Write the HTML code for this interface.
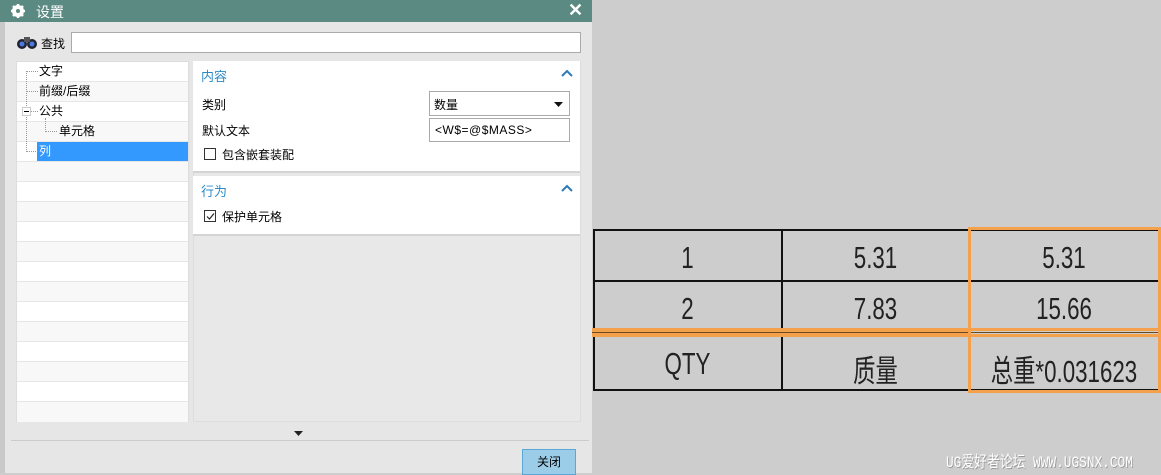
<!DOCTYPE html>
<html><head><meta charset="utf-8"><style>
*{margin:0;padding:0;box-sizing:border-box}
body{width:1161px;height:473px;background:#cdcdcd;position:relative;overflow:hidden;font-family:"Liberation Sans","Noto Sans CJK SC",sans-serif;font-size:12px;color:#000}
.a{position:absolute}
.dlg{left:0;top:0;width:592px;height:473px;background:#e6e6e6;border-left:5px solid #c9c9c9}
.title{left:0;top:0;width:592px;height:22px;background:#5b8a82;color:#fff;font-size:14px}
.tree{left:16px;top:61px;width:173px;height:361px;background:#fff;border:1px solid #ddd}
.row{position:absolute;left:0;width:171px;height:20px;border-bottom:1px solid #e6e6e6;line-height:19px}
.row:nth-child(even){background:#f8f8f8}
.sec{background:#fff;border-bottom:2px solid #d4d4d4;left:193px;width:387px}
.hd{color:#2c8ac8;font-size:13px}
.cb{width:12px;height:12px;border:1px solid #333;background:#fff}
.cell{position:absolute;font-family:"Liberation Sans Narrow","Liberation Sans","Noto Sans CJK SC",sans-serif;font-size:31px;text-align:center;transform:scaleX(.72);color:#222}
</style></head><body>
<div class="a dlg"></div>
<div class="a title">
 <svg class="a" style="left:11px;top:4px" width="14" height="14" viewBox="0 0 14 14"><circle cx="7" cy="7" r="4.5" fill="none" stroke="#fff" stroke-width="3"/><g stroke="#fff" stroke-width="2.5"><line x1="7" y1="0" x2="7" y2="14"/><line x1="0" y1="7" x2="14" y2="7"/><line x1="2" y1="2" x2="12" y2="12"/><line x1="12" y1="2" x2="2" y2="12"/></g><circle cx="7" cy="7" r="2" fill="#5b8a82"/></svg>
 <span class="a" style="left:36px;top:2px">设置</span>
 <span class="a" style="left:568px;top:0px;font-size:18px;font-weight:bold">✕</span>
</div>
<svg class="a" style="left:16px;top:34px" width="22" height="16" viewBox="0 0 22 16"><circle cx="6" cy="10" r="5" fill="#223" /><circle cx="16" cy="10" r="5" fill="#223"/><circle cx="6" cy="10" r="2.5" fill="#4a7adf"/><circle cx="16" cy="10" r="2.5" fill="#4a7adf"/><rect x="8" y="3" width="6" height="5" fill="#555"/></svg>
<span class="a" style="left:41px;top:35px">查找</span>
<div class="a" style="left:71px;top:32px;width:510px;height:21px;background:#fff;border:1px solid #aaa"></div>
<div class="a tree">
 <div class="row" style="top:0"><span style="margin-left:22px">文字</span></div>
 <div class="row" style="top:20px"><span style="margin-left:22px">前缀/后缀</span></div>
 <div class="row" style="top:40px"><span style="margin-left:22px">公共</span></div>
 <div class="row" style="top:60px"><span style="margin-left:42px">单元格</span></div>
 <div class="row" style="top:80px"><span style="position:absolute;left:20px;top:0;width:151px;height:19px;background:#3399ff;color:#fff;padding-left:2px">列</span></div>
 <div class="row" style="top:100px"></div><div class="row" style="top:120px"></div><div class="row" style="top:140px"></div><div class="row" style="top:160px"></div><div class="row" style="top:180px"></div><div class="row" style="top:200px"></div><div class="row" style="top:220px"></div><div class="row" style="top:240px"></div><div class="row" style="top:260px"></div><div class="row" style="top:280px"></div><div class="row" style="top:300px"></div><div class="row" style="top:320px"></div><div class="row" style="top:340px;border:0"></div>
 <div class="a" style="left:9px;top:9px;width:1px;height:81px;border-left:1px dotted #999"></div>
 <div class="a" style="left:9px;top:9px;width:12px;border-top:1px dotted #999"></div>
 <div class="a" style="left:9px;top:29px;width:12px;border-top:1px dotted #999"></div>
 <div class="a" style="left:9px;top:49px;width:12px;border-top:1px dotted #999"></div>
 <div class="a" style="left:9px;top:89px;width:12px;border-top:1px dotted #999"></div>
 <div class="a" style="left:28px;top:56px;width:1px;height:14px;border-left:1px dotted #999"></div>
 <div class="a" style="left:28px;top:69px;width:12px;border-top:1px dotted #999"></div>
 <div class="a" style="left:5px;top:45px;width:9px;height:9px;border:1px solid #ccc;background:#fff"><div class="a" style="left:1px;top:3px;width:5px;height:1px;background:#000"></div></div>
</div>
<div class="a" style="left:193px;top:61px;width:388px;height:361px;background:#e8e8e8;border:1px solid #ddd"></div>
<div class="a sec" style="top:61px;height:112px">
 <span class="a hd" style="left:8px;top:5px">内容</span>
 <svg class="a" style="left:368px;top:8px" width="12" height="8" viewBox="0 0 12 8"><path d="M1 7L6 2L11 7" fill="none" stroke="#2c7ab8" stroke-width="2"/></svg>
 <span class="a" style="left:9px;top:35px">类别</span>
 <div class="a" style="left:236px;top:30px;width:141px;height:25px;border:1px solid #aaa;background:#fff;padding:4px 4px">数量<svg class="a" style="right:6px;top:10px" width="9" height="5"><path d="M0 0H9L4.5 5Z" fill="#111"/></svg></div>
 <span class="a" style="left:9px;top:61px">默认文本</span>
 <div class="a" style="left:236px;top:57px;width:141px;height:24px;border:1px solid #aaa;background:#fff;padding:4px 5px;letter-spacing:.5px">&lt;W$=@$MASS&gt;</div>
 <div class="a cb" style="left:11px;top:87px"></div><span class="a" style="left:29px;top:85px">包含嵌套装配</span>
</div>
<div class="a sec" style="top:176px;height:60px">
 <span class="a hd" style="left:8px;top:5px">行为</span>
 <svg class="a" style="left:368px;top:8px" width="12" height="8" viewBox="0 0 12 8"><path d="M1 7L6 2L11 7" fill="none" stroke="#2c7ab8" stroke-width="2"/></svg>
 <div class="a cb" style="left:11px;top:34px"><svg class="a" style="left:1px;top:1px" width="9" height="9"><path d="M1 4.5L3.5 7L8 1.5" fill="none" stroke="#222" stroke-width="1.2"/></svg></div><span class="a" style="left:29px;top:32px">保护单元格</span>
</div>
<svg class="a" style="left:294px;top:431px" width="9" height="5"><path d="M0 0H9L4.5 5Z" fill="#222"/></svg>
<div class="a" style="left:11px;top:440px;width:578px;height:1px;background:#ccc"></div>
<div class="a" style="left:522px;top:449px;width:54px;height:26px;background:#9ccde8;border:1px solid #5aa8d8;text-align:center;line-height:24px">关闭</div>

<div class="a" style="left:593px;top:229px;width:376px;height:162px;border:2px solid #111;border-right:0"></div>
<div class="a" style="left:781px;top:229px;width:2px;height:162px;background:#111"></div>
<div class="a" style="left:593px;top:280px;width:566px;height:2px;background:#111"></div>
<div class="a" style="left:968px;top:229px;width:191px;height:2px;background:#111"></div>
<div class="a" style="left:968px;top:389px;width:191px;height:2px;background:#111"></div>
<div class="a" style="left:592px;top:328px;width:377px;height:9px;background:#f5a04a"></div>
<div class="a" style="left:592px;top:332px;width:569px;height:1px;background:#6a4a20"></div>
<div class="a" style="left:968px;top:227px;width:193px;height:166px;border:3px solid #f5a04a"></div>
<div class="a" style="left:968px;top:328px;width:193px;height:9px;border-top:3px solid #f5a04a;border-bottom:3px solid #f5a04a"></div>
<div class="cell" style="left:593px;top:240px;width:189px">1</div>
<div class="cell" style="left:782px;top:240px;width:187px">5.31</div>
<div class="cell" style="left:969px;top:240px;width:190px">5.31</div>
<div class="cell" style="left:593px;top:291px;width:189px">2</div>
<div class="cell" style="left:782px;top:291px;width:187px">7.83</div>
<div class="cell" style="left:969px;top:291px;width:190px">15.66</div>
<div class="cell" style="left:593px;top:346px;width:189px">QTY</div>
<div class="cell" style="left:782px;top:346px;width:187px">质量</div>
<div class="cell" style="left:939px;top:346px;width:250px">总重*0.031623</div>
<div class="a" style="left:946px;top:448px;font-family:'Liberation Mono','Noto Sans CJK SC',monospace;font-size:16px;color:#fff;text-shadow:1px 1px 0 #999;transform:scaleX(.8);transform-origin:left;white-space:nowrap">UG爱好者论坛 WWW.UGSNX.COM</div>
</body></html>
